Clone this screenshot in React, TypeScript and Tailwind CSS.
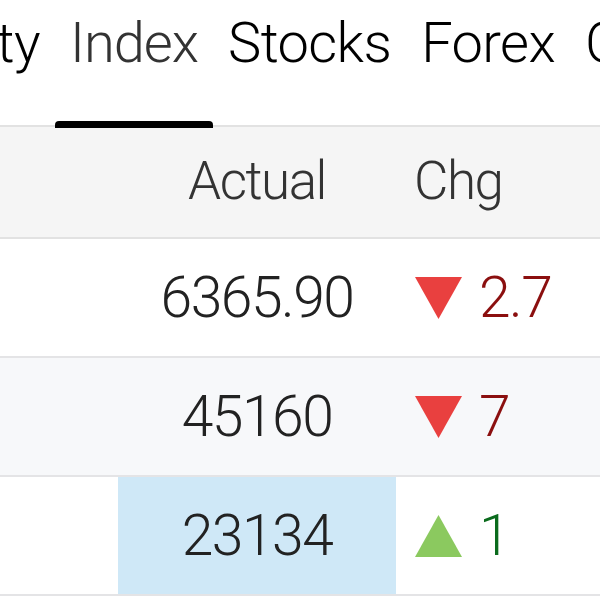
import React from 'react';

type Row = {
  actual: string;
  chg: string;
  up: boolean;
  bg: string;
  highlight?: boolean;
};

const rows: Row[] = [
  { actual: '6365.90', chg: '2.7', up: false, bg: 'bg-white' },
  { actual: '45160', chg: '7', up: false, bg: 'bg-[#f7f8fa]' },
  { actual: '23134', chg: '1', up: true, bg: 'bg-white', highlight: true },
];

const tabs = ['Equity', 'Index', 'Stocks', 'Forex', 'Commodities'];

const Arrow: React.FC<{ up: boolean }> = ({ up }) => (
  <svg width="49" height="44" viewBox="0 0 49 44" className="shrink-0">
    {up ? (
      <polygon points="24.5,1 48,43 1,43" fill="#8bc95f" />
    ) : (
      <polygon points="1,1 48,1 24.5,43" fill="#e9403f" />
    )}
  </svg>
);

const App: React.FC = () => {
  return (
    <div className="w-[600px] h-[600px] overflow-hidden bg-white font-['Roboto',sans-serif] font-light">
      {/* tab strip */}
      <div className="flex h-[125px] ml-[-122px] whitespace-nowrap">
        {tabs.map((t) => (
          <div key={t} className="relative px-[15px] pt-[10px] text-[56px] leading-[1.2]">
            <span className={t === 'Index' ? 'text-[#333] tracking-[-1px]' : 'text-black tracking-[-0.6px]'}>{t}</span>
            {t === 'Index' && (
              <div className="absolute left-0 right-0 bottom-[-3px] h-[7px] bg-black rounded-t-[4px] z-10" />
            )}
          </div>
        ))}
      </div>

      {/* table */}
      <div className="border-t-2 border-[#e2e2e2]">
        <div className="grid grid-cols-[118px_278px_1fr] h-[112px] bg-[#f5f5f5] border-b-2 border-[#e2e2e2] text-[53px] tracking-[-1.5px] text-[#333] items-center">
          <div />
          <div className="text-center">Actual</div>
          <div className="pl-[18px]">Chg</div>
        </div>
        {rows.map((r, i) => (
          <div
            key={i}
            className={`grid grid-cols-[118px_278px_1fr] h-[119px] border-b-2 border-[#e4e4e6] text-[57px] tracking-[-1.5px] ${r.bg}`}
          >
            <div />
            <div
              className={`flex items-center justify-center text-[#222] ${r.highlight ? 'bg-[#cfe8f7]' : ''}`}
            >
              {r.actual}
            </div>
            <div className="flex items-center gap-[16px] pl-[18px]">
              <Arrow up={r.up} />
              <span className={r.up ? 'text-[#0b6b1d]' : 'text-[#8b0f0f]'}>{r.chg}</span>
            </div>
          </div>
        ))}
      </div>
    </div>
  );
};

export default App;
